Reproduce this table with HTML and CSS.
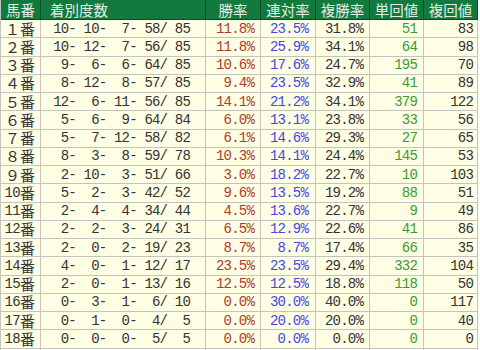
FILE: index.html
```html
<!DOCTYPE html>
<html lang="ja">
<head>
<meta charset="utf-8">
<title>馬番別成績</title>
<link rel="stylesheet" href="styles.css">
</head>
<body>
<div class="stats">
  <div class="row head">
    <span class="c horse">馬番</span>
    <span class="c rec">着別度数</span>
    <span class="c">勝率</span>
    <span class="c">連対率</span>
    <span class="c">複勝率</span>
    <span class="c">単回値</span>
    <span class="c">複回値</span>
  </div>
  <div class="row"><span class="c horse">１番</span><span class="c rec">10- 10-  7- 58/ 85</span><span class="c win">11.8%</span><span class="c ren">23.5%</span><span class="c num">31.8%</span><span class="c tan">51</span><span class="c num">83</span></div>
  <div class="row"><span class="c horse">２番</span><span class="c rec">10- 12-  7- 56/ 85</span><span class="c win">11.8%</span><span class="c ren">25.9%</span><span class="c num">34.1%</span><span class="c tan">64</span><span class="c num">98</span></div>
  <div class="row"><span class="c horse">３番</span><span class="c rec"> 9-  6-  6- 64/ 85</span><span class="c win">10.6%</span><span class="c ren">17.6%</span><span class="c num">24.7%</span><span class="c tan">195</span><span class="c num">70</span></div>
  <div class="row"><span class="c horse">４番</span><span class="c rec"> 8- 12-  8- 57/ 85</span><span class="c win">9.4%</span><span class="c ren">23.5%</span><span class="c num">32.9%</span><span class="c tan">41</span><span class="c num">89</span></div>
  <div class="row"><span class="c horse">５番</span><span class="c rec">12-  6- 11- 56/ 85</span><span class="c win">14.1%</span><span class="c ren">21.2%</span><span class="c num">34.1%</span><span class="c tan">379</span><span class="c num">122</span></div>
  <div class="row"><span class="c horse">６番</span><span class="c rec"> 5-  6-  9- 64/ 84</span><span class="c win">6.0%</span><span class="c ren">13.1%</span><span class="c num">23.8%</span><span class="c tan">33</span><span class="c num">56</span></div>
  <div class="row"><span class="c horse">７番</span><span class="c rec"> 5-  7- 12- 58/ 82</span><span class="c win">6.1%</span><span class="c ren">14.6%</span><span class="c num">29.3%</span><span class="c tan">27</span><span class="c num">65</span></div>
  <div class="row"><span class="c horse">８番</span><span class="c rec"> 8-  3-  8- 59/ 78</span><span class="c win">10.3%</span><span class="c ren">14.1%</span><span class="c num">24.4%</span><span class="c tan">145</span><span class="c num">53</span></div>
  <div class="row"><span class="c horse">９番</span><span class="c rec"> 2- 10-  3- 51/ 66</span><span class="c win">3.0%</span><span class="c ren">18.2%</span><span class="c num">22.7%</span><span class="c tan">10</span><span class="c num">103</span></div>
  <div class="row"><span class="c horse"><span class="d">10</span>番</span><span class="c rec"> 5-  2-  3- 42/ 52</span><span class="c win">9.6%</span><span class="c ren">13.5%</span><span class="c num">19.2%</span><span class="c tan">88</span><span class="c num">51</span></div>
  <div class="row"><span class="c horse"><span class="d">11</span>番</span><span class="c rec"> 2-  4-  4- 34/ 44</span><span class="c win">4.5%</span><span class="c ren">13.6%</span><span class="c num">22.7%</span><span class="c tan">9</span><span class="c num">49</span></div>
  <div class="row"><span class="c horse"><span class="d">12</span>番</span><span class="c rec"> 2-  2-  3- 24/ 31</span><span class="c win">6.5%</span><span class="c ren">12.9%</span><span class="c num">22.6%</span><span class="c tan">41</span><span class="c num">86</span></div>
  <div class="row"><span class="c horse"><span class="d">13</span>番</span><span class="c rec"> 2-  0-  2- 19/ 23</span><span class="c win">8.7%</span><span class="c ren">8.7%</span><span class="c num">17.4%</span><span class="c tan">66</span><span class="c num">35</span></div>
  <div class="row"><span class="c horse"><span class="d">14</span>番</span><span class="c rec"> 4-  0-  1- 12/ 17</span><span class="c win">23.5%</span><span class="c ren">23.5%</span><span class="c num">29.4%</span><span class="c tan">332</span><span class="c num">104</span></div>
  <div class="row"><span class="c horse"><span class="d">15</span>番</span><span class="c rec"> 2-  0-  1- 13/ 16</span><span class="c win">12.5%</span><span class="c ren">12.5%</span><span class="c num">18.8%</span><span class="c tan">118</span><span class="c num">50</span></div>
  <div class="row"><span class="c horse"><span class="d">16</span>番</span><span class="c rec"> 0-  3-  1-  6/ 10</span><span class="c win">0.0%</span><span class="c ren">30.0%</span><span class="c num">40.0%</span><span class="c tan">0</span><span class="c num">117</span></div>
  <div class="row"><span class="c horse"><span class="d">17</span>番</span><span class="c rec"> 0-  1-  0-  4/  5</span><span class="c win">0.0%</span><span class="c ren">20.0%</span><span class="c num">20.0%</span><span class="c tan">0</span><span class="c num">40</span></div>
  <div class="row"><span class="c horse"><span class="d">18</span>番</span><span class="c rec"> 0-  0-  0-  5/  5</span><span class="c win">0.0%</span><span class="c ren">0.0%</span><span class="c num">0.0%</span><span class="c tan">0</span><span class="c num">0</span></div>
  <div class="row blank"><span class="c"></span><span class="c"></span><span class="c"></span><span class="c"></span><span class="c"></span><span class="c"></span><span class="c"></span></div>
</div>
</body>
</html>
```

FILE: styles.css
```css
html, body {
  margin: 0;
  padding: 0;
  background: #ffffff;
  overflow: hidden;
}

.stats {
  display: grid;
  grid-template-columns: 40px 165px 55px 55px 54px 54px 54px;
  grid-template-rows: 20px repeat(19, 18.25px);
  width: 478px;
  border-left: 1px solid #c4c4bc;
  font-family: "Noto Sans CJK JP", sans-serif;
  font-size: 15px;
  color: #333333;
}

.row {
  display: contents;
}

.c {
  box-sizing: border-box;
  display: flex;
  align-items: center;
  justify-content: flex-end;
  padding-right: 6px;
  background: #fefee4;
  border-right: 1px solid #c4c4bc;
  border-bottom: 1px solid #c4c4bc;
  font-family: "Liberation Mono", "Noto Sans CJK JP", monospace;
  font-size: 14px;
  letter-spacing: -0.8px;
  white-space: pre;
  line-height: 16px;
}

.head .c {
  background: #127a3e;
  color: #e4efe4;
  border-right-color: #0a4d24;
  border-bottom-color: #0a4d24;
  justify-content: center;
  padding: 0;
  font-family: "Noto Sans CJK JP", sans-serif;
  font-size: 14.5px;
  letter-spacing: 0;
  line-height: 18px;
}

.head .c.rec {
  justify-content: flex-start;
  padding-left: 9px;
}

.horse {
  font-family: "Noto Sans CJK JP", sans-serif;
  font-size: 15px;
  letter-spacing: 0;
  padding-right: 5px;
}

.horse .d {
  font-family: "Liberation Mono", monospace;
  font-size: 14px;
  letter-spacing: -0.6px;
  line-height: 16px;
}

.rec {
  padding-right: 15px;
}

.win {
  color: #ad3a30;
}

.ren {
  color: #4646e6;
  padding-right: 7px;
}

.tan {
  color: #3a9a38;
}

.num {
  color: #333333;
}

.row .c:last-child.num {
  padding-right: 4px;
}

.blank .c {
  background: #ffffff;
}
```
